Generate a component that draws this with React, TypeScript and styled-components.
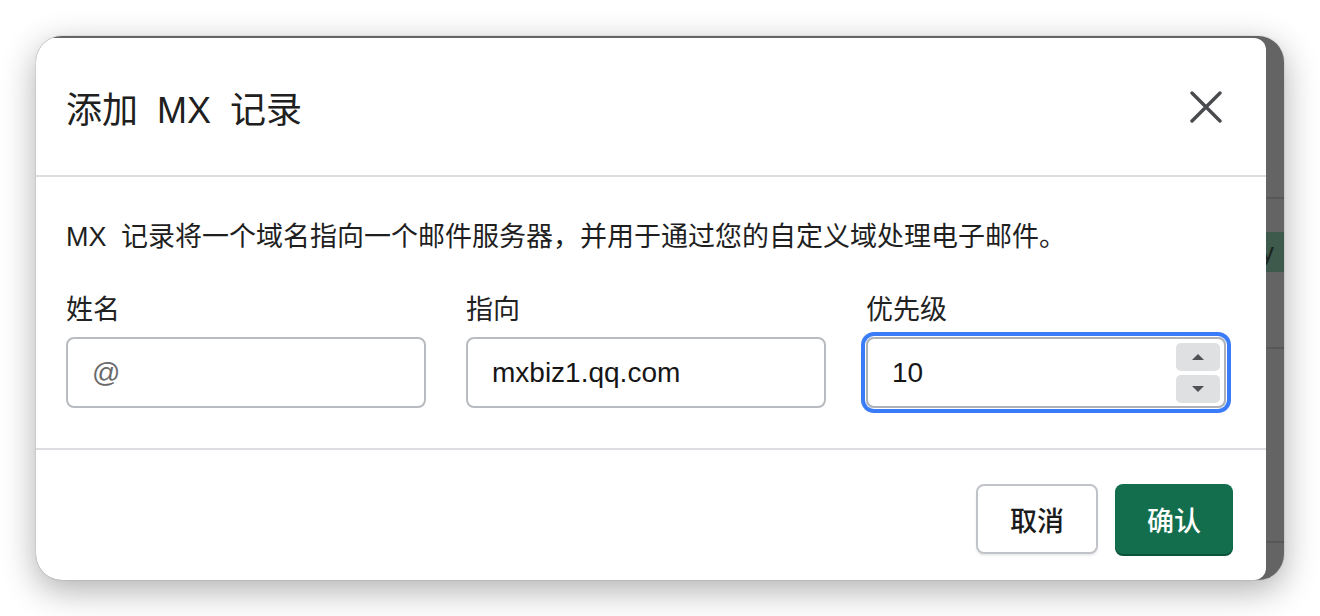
import styled, { createGlobalStyle } from "styled-components";

const GlobalStyle = createGlobalStyle`
  * {
    box-sizing: border-box;
  }
  html,
  body {
    margin: 0;
    background: #ffffff;
  }
  body {
    font-family: "Liberation Sans", "Noto Sans CJK SC", sans-serif;
    color: #1f1f1f;
  }
`;

const Page = styled.div`
  width: 1320px;
  height: 616px;
  padding: 36px;
  overflow: hidden;
  background: #ffffff;
`;

// window frame: backdrop page and the dialog share one grid cell
const Window = styled.div`
  display: grid;
  width: 1248px;
  height: 544px;
  border-radius: 26px;
  overflow: hidden;
  background: #646464;
  box-shadow: 0 10px 34px rgba(0, 0, 0, 0.32), 0 0 0 1px rgba(0, 0, 0, 0.06);

  & > * {
    grid-area: 1 / 1;
  }
`;

const Backdrop = styled.div`
  display: flex;
  flex-direction: column;
`;

const BackRow = styled.div<{ $height?: number }>`
  display: flex;
  justify-content: flex-end;
  align-items: flex-start;
  height: ${(props) => (props.$height ? `${props.$height}px` : "auto")};
  flex: ${(props) => (props.$height ? "none" : "1")};
  border-bottom: 2px solid #575757;

  &:last-child {
    border-bottom: none;
  }
`;

const BackBadge = styled.span`
  margin-top: 33px;
  height: 40px;
  padding: 0 10px 0 16px;
  background: #3d5a4c;
  color: #1c231f;
  font-size: 26px;
  line-height: 40px;
`;

const Modal = styled.div`
  display: flex;
  flex-direction: column;
  width: 1230px;
  height: 542px;
  margin-top: 2px;
  background: #ffffff;
  border-radius: 12px;
`;

const Header = styled.div`
  display: flex;
  align-items: center;
  justify-content: space-between;
  height: 139px;
  padding: 0 44px 0 30px;
  border-bottom: 2px solid #dcdde0;
`;

const Title = styled.h2`
  margin: 0;
  font-size: 36px;
  font-weight: 400;
  word-spacing: 9px;
  color: #202020;
`;

const CloseButton = styled.button`
  display: flex;
  padding: 0;
  border: none;
  background: none;
  color: #484a4d;
  cursor: pointer;
`;

const Body = styled.div`
  padding: 40px 40px 40px 30px;
  border-bottom: 2px solid #dcdde0;
`;

const Description = styled.p`
  margin: 0;
  font-size: 27px;
  line-height: 40px;
  word-spacing: 7px;
  color: #1f1f1f;
`;

const Fields = styled.div`
  display: grid;
  grid-template-columns: repeat(3, 360px);
  column-gap: 40px;
  margin-top: 33px;
`;

const Field = styled.label`
  display: flex;
  flex-direction: column;
  gap: 7px;
`;

const LabelText = styled.span`
  font-size: 27px;
  line-height: 40px;
  color: #222222;
`;

const InputBox = styled.div<{ $focused?: boolean }>`
  display: flex;
  align-items: center;
  height: 71px;
  border: 2px solid ${(props) => (props.$focused ? "#aeb1b6" : "#b8bbc0")};
  border-radius: 8px;
  box-shadow: ${(props) =>
    props.$focused ? "0 0 0 1px #ffffff, 0 0 0 5px #3a7cf7" : "none"};
`;

const TextInput = styled.input`
  flex: 1;
  min-width: 0;
  height: 100%;
  padding: 0 24px;
  border: none;
  outline: none;
  background: transparent;
  font-family: "Liberation Sans", "Noto Sans CJK SC", sans-serif;
  font-size: 28px;
  color: #161616;

  &::placeholder {
    color: #6a6a6a;
  }
`;

const Stepper = styled.div`
  display: flex;
  flex-direction: column;
  gap: 4px;
  padding-right: 4px;
`;

const StepButton = styled.span<{ $dir: "up" | "down" }>`
  display: flex;
  align-items: center;
  justify-content: center;
  width: 44px;
  height: 28px;
  border-radius: 5px;
  background: #dfe0e2;

  &::after {
    content: "";
    border-left: 6px solid transparent;
    border-right: 6px solid transparent;
    ${(props) =>
      props.$dir === "up"
        ? "border-bottom: 6px solid #4f5154;"
        : "border-top: 6px solid #4f5154;"}
  }
`;

const Footer = styled.div`
  display: flex;
  flex: 1;
  justify-content: flex-end;
  align-items: flex-start;
  gap: 17px;
  padding: 34px 33px 0 0;
`;

const Button = styled.button<{ $primary?: boolean }>`
  height: 70px;
  padding: 0 32px;
  border: ${(props) => (props.$primary ? "none" : "2px solid #c0c3c8")};
  border-radius: 8px;
  background: ${(props) => (props.$primary ? "#126e4d" : "#ffffff")};
  color: ${(props) => (props.$primary ? "#ffffff" : "#1b1b1b")};
  box-shadow: ${(props) =>
    props.$primary
      ? "0 2px 0 #0c5239"
      : "0 2px 2px rgba(0, 0, 0, 0.08)"};
  font-family: "Liberation Sans", "Noto Sans CJK SC", sans-serif;
  font-size: 27px;
  font-weight: 500;
  cursor: pointer;
`;

const CloseIcon = () => (
  <svg width="32" height="32" viewBox="0 0 32 32" fill="none">
    <path
      d="M2 2 L30 30 M30 2 L2 30"
      stroke="currentColor"
      strokeWidth="3.4"
      strokeLinecap="round"
    />
  </svg>
);

const App = () => {
  return (
    <Page>
      <GlobalStyle />
      <Window>
        <Backdrop>
          <BackRow $height={163} />
          <BackRow $height={150}>
            <BackBadge>Ready</BackBadge>
          </BackRow>
          <BackRow $height={194} />
          <BackRow />
        </Backdrop>

        <Modal>
          <Header>
            <Title>添加 MX 记录</Title>
            <CloseButton aria-label="关闭">
              <CloseIcon />
            </CloseButton>
          </Header>

          <Body>
            <Description>
              MX 记录将一个域名指向一个邮件服务器，并用于通过您的自定义域处理电子邮件。
            </Description>
            <Fields>
              <Field>
                <LabelText>姓名</LabelText>
                <InputBox>
                  <TextInput placeholder="@" />
                </InputBox>
              </Field>
              <Field>
                <LabelText>指向</LabelText>
                <InputBox>
                  <TextInput defaultValue="mxbiz1.qq.com" />
                </InputBox>
              </Field>
              <Field>
                <LabelText>优先级</LabelText>
                <InputBox $focused>
                  <TextInput defaultValue="10" />
                  <Stepper>
                    <StepButton $dir="up" />
                    <StepButton $dir="down" />
                  </Stepper>
                </InputBox>
              </Field>
            </Fields>
          </Body>

          <Footer>
            <Button>取消</Button>
            <Button $primary>确认</Button>
          </Footer>
        </Modal>
      </Window>
    </Page>
  );
};

export default App;
